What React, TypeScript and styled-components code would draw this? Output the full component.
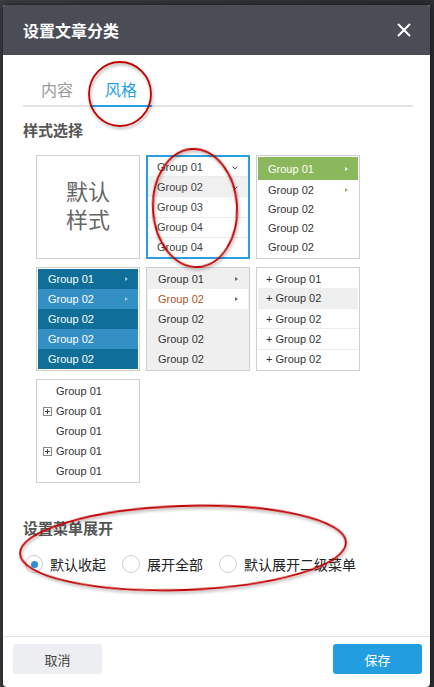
import React from "react";
import styled, { createGlobalStyle } from "styled-components";

const GlobalStyle = createGlobalStyle`
  html, body {
    margin: 0;
    padding: 0;
    background: #33353a;
  }
  * { box-sizing: border-box; }
`;

const CJK = `"Liberation Sans", "Noto Sans CJK SC", Arial, sans-serif`;

const Page = styled.div`
  position: relative;
  width: 434px;
  height: 687px;
  overflow: hidden;
  padding: 5px 4px 0 3px;
  background: linear-gradient(90deg, #3b3d42 0%, #2c2e33 100%);
  font-family: ${CJK};
`;

const Dialog = styled.div`
  width: 427px;
  height: 682px;
  background: #fff;
  border-radius: 2px 2px 4px 4px;
  box-shadow: 0 0 6px rgba(0, 0, 0, 0.6);
  display: flex;
  flex-direction: column;
  overflow: hidden;
`;

const Header = styled.div`
  height: 50px;
  background: #4a4d55;
  display: flex;
  align-items: center;
  justify-content: space-between;
  padding: 0 18px 0 20px;
  color: #fff;
  font-size: 16px;
  font-weight: bold;
`;

const Close = styled.span`
  display: flex;
  width: 16px;
  height: 16px;
`;

const Body = styled.div`
  flex: 1;
  padding: 22px 17px 0 20px;
`;

const Tabs = styled.div`
  display: flex;
  border-bottom: 2px solid #e2e2e2;
  padding-left: 3px;
`;

const Tab = styled.div<{ $active?: boolean }>`
  width: 62px;
  text-align: center;
  font-size: 16px;
  padding-bottom: 4px;
  margin-bottom: -2px;
  margin-right: 2px;
  color: ${(p) => (p.$active ? "#2a9fe0" : "#999")};
  border-bottom: 2px solid ${(p) => (p.$active ? "#2a9fe0" : "transparent")};
`;

const SectionTitle = styled.div<{ $top: number }>`
  margin-top: ${(p) => p.$top}px;
  font-size: 15px;
  font-weight: bold;
  color: #555;
`;

const CardGrid = styled.div`
  margin-top: 15px;
  margin-left: 13px;
  display: grid;
  grid-template-columns: repeat(3, 104px);
  grid-auto-rows: 104px;
  column-gap: 6px;
  row-gap: 8px;
`;

const Card = styled.div<{ $selected?: boolean; $bg?: string }>`
  border: ${(p) => (p.$selected ? "2px solid #2a9fe0" : "1px solid #cfcfcf")};
  background: ${(p) => p.$bg || "#fff"};
  padding: ${(p) => (p.$selected ? "0" : "1px")};
  display: flex;
  flex-direction: column;
`;

const DefaultCard = styled(Card)`
  align-items: center;
  justify-content: center;
  font-size: 22px;
  line-height: 28px;
  color: #666;
  text-align: center;
`;

const Item = styled.div<{
  $bg?: string;
  $color?: string;
  $line?: boolean;
  $pad?: number;
  $grow?: number;
}>`
  flex: ${(p) => p.$grow ?? 1};
  display: flex;
  align-items: center;
  justify-content: space-between;
  padding: 0 10px 0 ${(p) => p.$pad ?? 10}px;
  font-size: 11px;
  font-family: "Liberation Sans", Arial, sans-serif;
  background: ${(p) => p.$bg || "transparent"};
  color: ${(p) => p.$color || "#333"};
  border-top: ${(p) => (p.$line ? "1px solid #ececec" : "none")};
`;

const Arrow = styled.span<{ $color: string }>`
  width: 0;
  height: 0;
  border-top: 2.5px solid transparent;
  border-bottom: 2.5px solid transparent;
  border-left: 3.5px solid ${(p) => p.$color};
`;

const Chevron = styled.svg`
  margin-top: 3px;
`;

const TreeItem = styled.div`
  flex: 1;
  display: flex;
  align-items: center;
  padding-left: 18px;
  font-size: 11px;
  font-family: "Liberation Sans", Arial, sans-serif;
  color: #333;
`;

const PlusBox = styled.span`
  width: 9px;
  height: 9px;
  margin-left: -13px;
  margin-right: 4px;
  border: 1px solid #888;
  position: relative;
  &::before,
  &::after {
    content: "";
    position: absolute;
    background: #444;
  }
  &::before { left: 1px; right: 1px; top: 3px; height: 1px; }
  &::after { top: 1px; bottom: 1px; left: 3px; width: 1px; }
`;

const RadioRow = styled.div`
  display: flex;
  align-items: center;
  margin-top: 16px;
  padding-left: 2px;
`;

const RadioOption = styled.label`
  display: flex;
  align-items: center;
  margin-right: 16px;
  font-size: 14px;
  color: #222;
`;

const RadioCircle = styled.span<{ $checked?: boolean }>`
  width: 18px;
  height: 18px;
  border-radius: 50%;
  border: 1px solid #cfcfcf;
  margin-right: 7px;
  display: flex;
  align-items: center;
  justify-content: center;
  &::after {
    content: "";
    width: 7px;
    height: 7px;
    border-radius: 50%;
    background: ${(p) => (p.$checked ? "#2a8fd8" : "transparent")};
  }
`;

const Footer = styled.div`
  height: 51px;
  border-top: 1px solid #e4e4e4;
  display: flex;
  align-items: center;
  justify-content: space-between;
  padding: 0 8px 6px 10px;
`;

const Button = styled.button<{ $primary?: boolean }>`
  width: 89px;
  height: 30px;
  border: none;
  border-radius: 3px;
  font-family: ${CJK};
  font-size: 13px;
  background: ${(p) => (p.$primary ? "#229ee0" : "#eceef1")};
  color: ${(p) => (p.$primary ? "#fff" : "#444")};
`;

const Marks = styled.svg`
  position: absolute;
  left: 0;
  top: 0;
  pointer-events: none;
`;

const groups = ["Group 01", "Group 02", "Group 03", "Group 04", "Group 04"];

export default function App() {
  return (
    <Page>
      <GlobalStyle />
      <Dialog>
        <Header>
          <span>设置文章分类</span>
          <Close>
            <svg width="16" height="16" viewBox="0 0 16 16">
              <path d="M2 2 L14 14 M14 2 L2 14" stroke="#fff" strokeWidth="2" />
            </svg>
          </Close>
        </Header>
        <Body>
          <Tabs>
            <Tab>内容</Tab>
            <Tab $active>风格</Tab>
          </Tabs>
          <SectionTitle $top={12}>样式选择</SectionTitle>
          <CardGrid>
            <DefaultCard>
              默认
              <br />
              样式
            </DefaultCard>

            <Card $selected>
              {groups.map((g, i) => (
                <Item
                  key={i}
                  $pad={9}
                  $line={i > 0}
                  $bg={i === 1 ? "#f0f0f0" : undefined}
                  $color="#444"
                >
                  {g}
                  {i < 2 && (
                    <Chevron width="6" height="4" viewBox="0 0 6 4">
                      <path d="M0.5 0.5 L3 3 L5.5 0.5" fill="none" stroke="#555" strokeWidth="1" />
                    </Chevron>
                  )}
                </Item>
              ))}
            </Card>

            <Card>
              {[0, 1, 2, 3, 4].map((i) => (
                <Item
                  key={i}
                  $grow={i === 0 ? 1.2 : 1}
                  $bg={i === 0 ? "#8bb85c" : undefined}
                  $color={i === 0 ? "#fff" : "#333"}
                >
                  {i === 0 ? "Group 01" : "Group 02"}
                  {i === 0 && <Arrow $color="#fff" />}
                  {i === 1 && <Arrow $color="#8bb85c" />}
                </Item>
              ))}
            </Card>

            <Card>
              {[0, 1, 2, 3, 4].map((i) => (
                <Item key={i} $bg={i % 2 === 0 ? "#0f6f98" : "#3490c4"} $color="#fff">
                  {i === 0 ? "Group 01" : "Group 02"}
                  {i < 2 && <Arrow $color="#9fcbe6" />}
                </Item>
              ))}
            </Card>

            <Card $bg="#efefef">
              {[0, 1, 2, 3, 4].map((i) => (
                <Item
                  key={i}
                  $bg={i === 1 ? "#fff" : undefined}
                  $color={i === 1 ? "#b4522a" : "#333"}
                >
                  {i === 0 ? "Group 01" : "Group 02"}
                  {i < 2 && <Arrow $color="#666" />}
                </Item>
              ))}
            </Card>

            <Card>
              {[0, 1, 2, 3, 4].map((i) => (
                <Item key={i} $pad={8} $line={i > 1} $bg={i === 1 ? "#efefef" : undefined}>
                  {i === 0 ? "+ Group 01" : "+ Group 02"}
                </Item>
              ))}
            </Card>

            <Card>
              {[0, 1, 2, 3, 4].map((i) => (
                <TreeItem key={i}>
                  {(i === 1 || i === 3) && <PlusBox />}
                  Group 01
                </TreeItem>
              ))}
            </Card>
          </CardGrid>

          <SectionTitle $top={34}>设置菜单展开</SectionTitle>
          <RadioRow>
            <RadioOption>
              <RadioCircle $checked />
              默认收起
            </RadioOption>
            <RadioOption>
              <RadioCircle />
              展开全部
            </RadioOption>
            <RadioOption>
              <RadioCircle />
              默认展开二级菜单
            </RadioOption>
          </RadioRow>
        </Body>
        <Footer>
          <Button>取消</Button>
          <Button $primary>保存</Button>
        </Footer>
      </Dialog>

      <Marks width="434" height="687" viewBox="0 0 434 687">
        <defs>
          <filter id="shadow" x="-20%" y="-20%" width="140%" height="140%">
            <feDropShadow dx="1" dy="2" stdDeviation="1.5" floodColor="#000" floodOpacity="0.35" />
          </filter>
        </defs>
        <g fill="none" stroke="#c00000" strokeWidth="1.8" filter="url(#shadow)">
          <ellipse cx="120" cy="94" rx="31" ry="32" />
          <ellipse cx="195" cy="208" rx="42" ry="59" transform="rotate(-3 195 208)" />
          <ellipse cx="183" cy="548" rx="163" ry="42" transform="rotate(-2 183 548)" />
        </g>
      </Marks>
    </Page>
  );
}
